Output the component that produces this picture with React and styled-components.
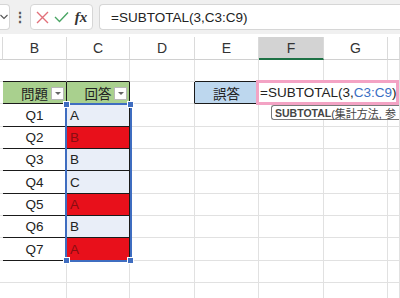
import React from "react";
import styled, { createGlobalStyle } from "styled-components";

const GlobalStyle = createGlobalStyle`
  body {
    margin: 0;
    background: #fff;
    overflow: hidden;
    font-family: "Liberation Sans", "Noto Sans CJK JP", sans-serif;
  }
`;

const COLS = [3, 64, 63, 65, 64, 65, 64, 12];
const ROWS = [22, 22, 23, 22, 22, 23, 22, 22, 23, 22, 22];
const LETTERS = ["", "B", "C", "D", "E", "F", "G", ""];
const BLACK = "#1a1a1a";
const RED = "#e8101b";
const SEL = "#e9eef8";

const answers = [
  { q: "Q1", a: "A", wrong: false },
  { q: "Q2", a: "B", wrong: true },
  { q: "Q3", a: "B", wrong: false },
  { q: "Q4", a: "C", wrong: false },
  { q: "Q5", a: "A", wrong: true },
  { q: "Q6", a: "B", wrong: false },
  { q: "Q7", a: "A", wrong: true },
];

const Toolbar = styled.div`
  height: 34px;
  background: #f0f0f0;
  display: flex;
  align-items: center;
`;

const NameBox = styled.div`
  box-sizing: border-box;
  width: 10px;
  height: 26px;
  background: #fff;
  border: 1px solid #d6d6d6;
  border-left: none;
  border-radius: 0 4px 4px 0;
  display: flex;
  align-items: center;
`;

const Dots = styled.div`
  width: 20px;
  display: flex;
  justify-content: center;
  color: #555;
  font-size: 14px;
  font-weight: bold;
`;

const CommandBox = styled.div`
  box-sizing: border-box;
  width: 63px;
  height: 26px;
  background: #fff;
  border: 1px solid #d6d6d6;
  border-radius: 4px;
  display: flex;
  align-items: center;
  justify-content: space-around;
  padding: 0 2px;
`;

const Fx = styled.span`
  font-family: "Liberation Serif", serif;
  font-style: italic;
  font-weight: bold;
  font-size: 15px;
  color: #333;
`;

const FormulaBox = styled.div`
  box-sizing: border-box;
  flex: 1;
  margin-left: 6px;
  height: 26px;
  background: #fff;
  border: 1px solid #d6d6d6;
  border-right: none;
  border-radius: 4px 0 0 4px;
  display: flex;
  align-items: center;
  padding-left: 11px;
  font-size: 13.5px;
  color: #222;
`;

const Sheet = styled.div`
  position: relative;
  overflow: hidden;
  margin-top: 3px;
  display: grid;
  grid-template-columns: ${COLS.map((c) => c + "px").join(" ")};
  grid-template-rows: 23px ${ROWS.map((r) => r + "px").join(" ")};
`;

const ColHead = styled.div`
  box-sizing: border-box;
  display: flex;
  align-items: center;
  justify-content: center;
  font-size: 14px;
  color: #333;
  background: ${(p) => (p.$active ? "#d3d3d3" : "#fff")};
  border-right: 1px solid #dadada;
  border-bottom: ${(p) => (p.$active ? "2px solid #1e7145" : "1px solid #d0d0d0")};
`;

const Cell = styled.div`
  box-sizing: border-box;
  position: relative;
  display: flex;
  align-items: center;
  justify-content: ${(p) => p.$align || "flex-start"};
  padding: 0 3px;
  font-size: 13.5px;
  color: ${(p) => p.$color || "#222"};
  background: ${(p) => p.$bg || "#fff"};
  border-right: 1px solid ${(p) => p.$r || "#e1e1e1"};
  border-bottom: 1px solid ${(p) => p.$b || "#e1e1e1"};
`;

const Dropdown = styled.div`
  box-sizing: border-box;
  position: absolute;
  right: 2px;
  bottom: 3px;
  width: 13px;
  height: 13px;
  background: #fff;
  border: 1px solid #b8b8b8;
  display: flex;
  align-items: center;
  justify-content: center;
  &::after {
    content: "";
    border-left: 3px solid transparent;
    border-right: 3px solid transparent;
    border-top: 3px solid #666;
  }
`;

const Selection = styled.div`
  position: absolute;
  left: 65px;
  top: 66px;
  width: 67px;
  height: 159px;
  box-sizing: border-box;
  border: 2px solid #3f6dc0;
  pointer-events: none;
`;

const Handle = styled.div`
  position: absolute;
  width: 5px;
  height: 5px;
  background: #3f6dc0;
  border: 1px solid #fff;
  ${(p) => (p.$top ? "top: -4px;" : "bottom: -4px;")}
  ${(p) => (p.$left ? "left: -4px;" : "right: -4px;")}
`;

const Editor = styled.div`
  position: absolute;
  left: 256px;
  top: 43px;
  width: 143px;
  height: 25px;
  box-sizing: border-box;
  border: 3px solid #f3a3c4;
  background: #fff;
  display: flex;
  align-items: center;
  font-size: 13.5px;
  color: #222;
  white-space: nowrap;
`;

const Caret = styled.div`
  width: 2px;
  height: 15px;
  background: #1e7145;
  margin-right: 1px;
`;

const Ref = styled.span`
  color: #3a6fc4;
`;

const Tooltip = styled.div`
  position: absolute;
  left: 271px;
  top: 68px;
  height: 15px;
  padding: 0 3px;
  box-sizing: border-box;
  border: 1px solid #7a7a7a;
  border-right: none;
  border-radius: 3px 0 0 3px;
  background: #fff;
  display: flex;
  align-items: center;
  white-space: nowrap;
  font-size: 11px;
  color: #444;
  b {
    font-size: 10.5px;
  }
`;

const Cross = () => (
  <svg width="13" height="13" viewBox="0 0 13 13">
    <path d="M1 1 L12 12 M12 1 L1 12" stroke="#e2707a" strokeWidth="1.4" fill="none" />
  </svg>
);

const Check = () => (
  <svg width="15" height="12" viewBox="0 0 15 12">
    <path d="M1 6 L5.5 10.5 L14 1.5" stroke="#4aa564" strokeWidth="1.4" fill="none" />
  </svg>
);

const Chevron = () => (
  <svg width="8" height="6" viewBox="0 0 8 6">
    <path d="M0.5 1 L4 4.5 L7.5 1" stroke="#555" strokeWidth="1.1" fill="none" />
  </svg>
);

function buildRow(r) {
  // r: 1-based sheet row
  const cells = [];
  if (r === 1) {
    cells.push({}, { b: BLACK }, { b: BLACK }, {}, { b: BLACK }, {}, {}, {});
  } else if (r === 2) {
    cells.push(
      { r: BLACK },
      { text: "問題", bg: "#a9d08e", r: BLACK, b: BLACK, align: "center", drop: true },
      { text: "回答", bg: "#a9d08e", r: BLACK, b: BLACK, align: "center", drop: true },
      { r: BLACK },
      { text: "誤答", bg: "#bdd7ee", r: BLACK, b: BLACK, align: "center" },
      {},
      {},
      {}
    );
  } else if (r >= 3 && r <= 9) {
    const row = answers[r - 3];
    cells.push(
      { r: BLACK },
      { text: row.q, r: BLACK, b: BLACK, align: "center" },
      {
        text: row.a,
        r: BLACK,
        b: BLACK,
        bg: row.wrong ? RED : SEL,
        color: row.wrong ? "#8a0d12" : "#222",
      },
      {},
      {},
      {},
      {},
      {}
    );
  } else {
    cells.push({}, {}, {}, {}, {}, {}, {}, {});
  }
  return cells;
}

export default function App() {
  return (
    <>
      <GlobalStyle />
      <Toolbar>
        <NameBox>
          <Chevron />
        </NameBox>
        <Dots>⋮</Dots>
        <CommandBox>
          <Cross />
          <Check />
          <Fx>fx</Fx>
        </CommandBox>
        <FormulaBox>=SUBTOTAL(3,C3:C9)</FormulaBox>
      </Toolbar>
      <Sheet>
        {LETTERS.map((l, i) => (
          <ColHead key={"h" + i} $active={l === "F"}>
            {l}
          </ColHead>
        ))}
        {ROWS.map((_, ri) =>
          buildRow(ri + 1).map((c, ci) => (
            <Cell
              key={ri + "-" + ci}
              $r={c.r}
              $b={c.b}
              $bg={c.bg}
              $align={c.align}
              $color={c.color}
            >
              {c.text}
              {c.drop && <Dropdown />}
            </Cell>
          ))
        )}
        <Selection>
          <Handle $top $left />
          <Handle $top />
          <Handle $left />
          <Handle />
        </Selection>
        <Editor>
          <Caret />
          =SUBTOTAL(3,<Ref>C3:C9</Ref>)
        </Editor>
        <Tooltip>
          <b>SUBTOTAL</b>(集計方法, 参
        </Tooltip>
      </Sheet>
    </>
  );
}
